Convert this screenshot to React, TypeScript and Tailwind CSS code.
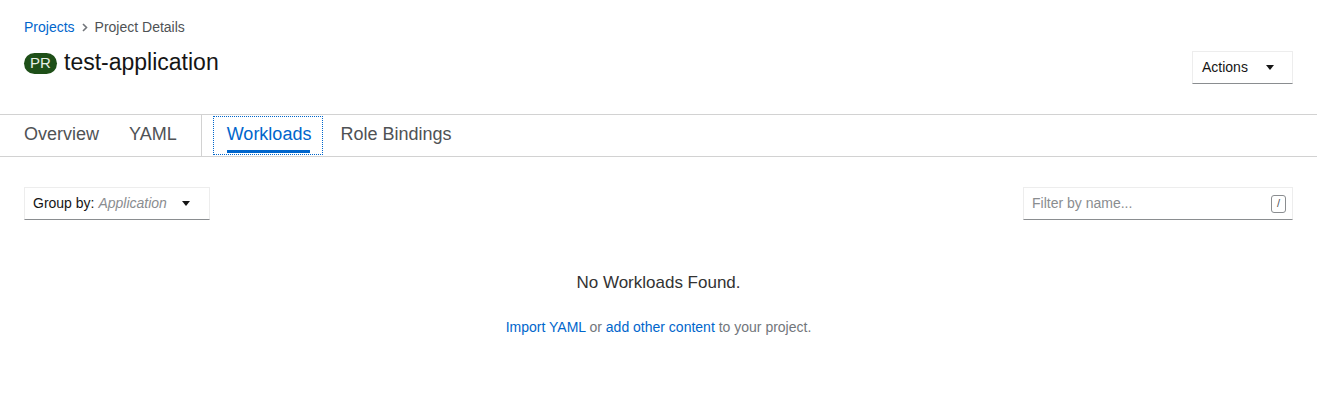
const Caret = () => (
  <svg width="8" height="5" viewBox="0 0 8 5" className="fill-[#151515]">
    <path d="M0 0h8L4 5z" />
  </svg>
);

const tabs = ["Overview", "YAML", "Workloads", "Role Bindings"];

export default function App() {
  return (
    <div className="min-h-[402px] bg-white text-[#151515] font-['Liberation_Sans',sans-serif]">
      {/* Header */}
      <div className="px-6 pt-[18px] pb-[30px]">
        <nav className="flex items-center text-[14px] leading-[18px]">
          <a className="text-[#0066cc]">Projects</a>
          <svg width="6" height="9" viewBox="0 0 6 9" className="mx-[7px] fill-none stroke-[#72767b]" strokeWidth="1.6">
            <path d="M1 1l3.5 3.5L1 8" />
          </svg>
          <span className="text-[#4f5255]">Project Details</span>
        </nav>
        <div className="flex items-start justify-between">
          <div className="flex items-center mt-[10px]">
            <span className="inline-flex items-center justify-center h-[21px] w-[33px] rounded-full bg-[#1e4f18] text-[#e8f0e6] text-[15px] mr-[7px] mt-[2px]">
              PR
            </span>
            <h1 className="text-[23px] leading-[32px] text-[#151515]">test-application</h1>
          </div>
          <button className="mt-[15px] flex items-center justify-between w-[101px] h-[33px] pl-[9px] pr-[18px] border border-[#ededed] border-b-[#8a8d90] text-[14px] text-[#151515]">
            <span>Actions</span>
            <Caret />
          </button>
        </div>
      </div>

      {/* Tabs */}
      <div className="flex items-stretch h-[43px] border-t border-b border-[#d2d2d2] px-6">
        {tabs.map((t, i) => (
          <div key={t} className="flex items-stretch">
            {i === 2 && <div className="w-px bg-[#d2d2d2] mr-[11px]" />}
            <div
              className={
                i === 2
                  ? "relative flex items-center pl-[14px] pr-[12px] my-[1px] outline-1 outline-dotted outline-[#0066cc] -outline-offset-1 text-[#0066cc]"
                  : "flex items-center text-[#4f5255]"
              }
              style={i === 0 ? { marginRight: 30 } : i === 1 ? { marginRight: 24 } : i === 2 ? { marginRight: 17 } : undefined}
            >
              <span className="text-[18px] -mt-[3px]">{t}</span>
              {i === 2 && <span className="absolute left-[14px] right-[13px] bottom-[2px] h-[3px] bg-[#0066cc]" />}
            </div>
          </div>
        ))}
      </div>

      {/* Toolbar */}
      <div className="flex items-center justify-between px-6 pt-[30px]">
        <button className="flex items-center justify-between w-[186px] h-[33px] pl-[8px] pr-[19px] border border-[#ededed] border-b-[#8a8d90] text-[14px]">
          <span>
            <span className="text-[#151515]">Group by: </span>
            <span className="italic text-[#8a8d90]">Application</span>
          </span>
          <Caret />
        </button>
        <div className="flex items-center justify-between w-[270px] h-[33px] pl-[8px] pr-[6px] border border-[#ededed] border-b-[#8a8d90] text-[14px]">
          <span className="text-[#8a8d90]">Filter by name...</span>
          <span className="flex items-center justify-center w-[15px] h-[18px] border border-[#8a8d90] rounded-[3px] text-[11px] text-[#4f5255]">
            /
          </span>
        </div>
      </div>

      {/* Empty state */}
      <div className="flex flex-col items-center pt-[51px]">
        <h2 className="text-[17px] leading-[24px] text-[#333]">No Workloads Found.</h2>
        <p className="mt-[22px] text-[14px] text-[#72767b]">
          <a className="text-[#0066cc]">Import YAML</a> or <a className="text-[#0066cc]">add other content</a> to your project.
        </p>
      </div>
    </div>
  );
}
